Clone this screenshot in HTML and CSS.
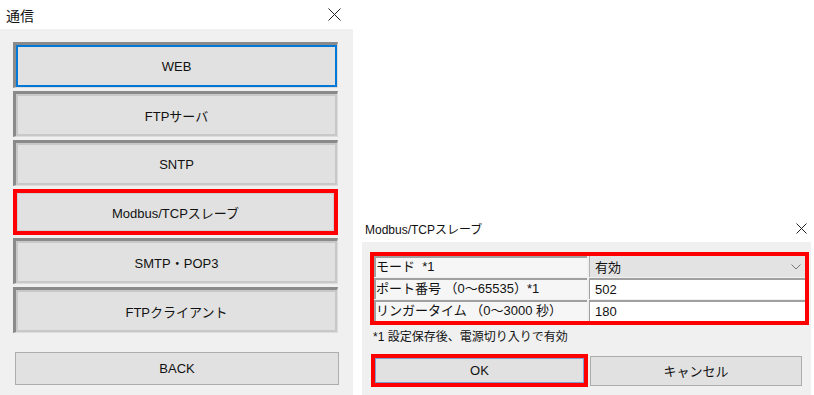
FILE: index.html
```html
<!DOCTYPE html>
<html lang="ja">
<head>
  <meta charset="UTF-8" />
  <title>通信</title>
  <link rel="stylesheet" href="styles.css">
</head>
<body>
  <div class="dialog main">
    <div class="titlebar">
      <span class="title">通信</span>
      <svg class="close" width="13" height="13" viewBox="0 0 13 13"><path d="M0.5 0.5L12.5 12.5M12.5 0.5L0.5 12.5" stroke="#222" stroke-width="1" fill="none"/></svg>
    </div>
    <div class="panel">
      <div class="menu">
        <div class="frame"><div class="btn focus">WEB</div></div>
        <div class="frame"><div class="btn">FTPサーバ</div></div>
        <div class="frame"><div class="btn">SNTP</div></div>
        <div class="frame marked"><div class="btn">Modbus/TCPスレーブ</div></div>
        <div class="frame"><div class="btn">SMTP・POP3</div></div>
        <div class="frame"><div class="btn">FTPクライアント</div></div>
      </div>
      <div class="plain back">BACK</div>
    </div>
  </div>

  <div class="dialog sub">
    <div class="titlebar">
      <span class="title small">Modbus/TCPスレーブ</span>
      <svg class="close" width="11" height="11" viewBox="0 0 11 11"><path d="M0.5 0.5L10.5 10.5M10.5 0.5L0.5 10.5" stroke="#222" stroke-width="1" fill="none"/></svg>
    </div>
    <div class="panel">
      <div class="settings">
        <div class="label">モード&nbsp;&nbsp;*1</div>
        <div class="value combo">
          <span>有効</span>
          <svg width="10" height="6" viewBox="0 0 10 6"><path d="M0.5 0.5L5 5L9.5 0.5" stroke="#777" stroke-width="1" fill="none"/></svg>
        </div>
        <div class="label">ポート番号 （0～65535）*1</div>
        <div class="value field">502</div>
        <div class="label">リンガータイム （0～3000 秒）</div>
        <div class="value field">180</div>
      </div>
      <div class="note">*1 設定保存後、電源切り入りで有効</div>
      <div class="actions">
        <div class="ok-mark"><div class="plain ok">OK</div></div>
        <div class="plain cancel">キャンセル</div>
      </div>
    </div>
  </div>
</body>
</html>
```

FILE: styles.css
```css
body {
  margin: 0;
  height: 395px;
  background: #fff;
  color: #111;
  font-family: "Liberation Sans", "Noto Sans CJK JP", sans-serif;
  font-size: 13px;
  display: flex;
  align-items: flex-end;
  gap: 9px;
  overflow: hidden;
}
.dialog {
  display: flex;
  flex-direction: column;
  box-sizing: border-box;
}
.main {
  width: 353px;
  height: 395px;
}
.sub {
  width: 449px;
  height: 180px;
}
.titlebar {
  display: flex;
  align-items: center;
  justify-content: space-between;
  background: #fff;
}
.main .titlebar {
  height: 29px;
  padding: 0 12px 0 6px;
}
.sub .titlebar {
  height: 27px;
  padding: 0 4px 0 3px;
}
.title {
  font-size: 14px;
}
.title.small {
  font-size: 12px;
}
.panel {
  flex: 1;
  background: #f0f0f0;
  display: flex;
  flex-direction: column;
}
.main .panel {
  padding: 13px 0 10px 13px;
}
.menu {
  display: flex;
  flex-direction: column;
  gap: 3px;
  width: 325px;
}
.frame {
  height: 46px;
  box-sizing: border-box;
  border-style: solid;
  border-width: 3px 1px 1px 3px;
  border-color: #8a8a8a #dcdcdc #dcdcdc #8a8a8a;
}
.frame.marked {
  border: 4px solid #ff0000;
}
.btn {
  height: 100%;
  box-sizing: border-box;
  border: 2px solid #c8c8c8;
  background: #e1e1e1;
  display: flex;
  align-items: center;
  justify-content: center;
}
.btn.focus {
  border-color: #0078d7;
}
.marked .btn {
  border: 1px solid #cfcfcf;
}
.plain {
  box-sizing: border-box;
  border: 1px solid #adadad;
  background: #e1e1e1;
  display: flex;
  align-items: center;
  justify-content: center;
}
.back {
  margin-top: auto;
  margin-left: 2px;
  width: 324px;
  height: 33px;
}
.sub .panel {
  padding: 10px 3px 8px 8px;
}
.settings {
  display: grid;
  grid-template-columns: 213px 216px;
  grid-auto-rows: 21px;
  column-gap: 2px;
  row-gap: 1px;
  border: 4px solid #ff0000;
  width: max-content;
}
.label {
  box-sizing: border-box;
  border-top: 2px solid #a0a0a0;
  border-left: 2px solid #a0a0a0;
  background: #f6f6f6;
  line-height: 18px;
  white-space: nowrap;
  overflow: hidden;
}
.value {
  box-sizing: border-box;
  padding-left: 5px;
  display: flex;
  align-items: center;
}
.combo {
  background: #e3e3e3;
  border-left: 1px solid #b0b0b0;
  justify-content: space-between;
  padding-right: 4px;
}
.field {
  background: #fff;
  border-top: 2px solid #a0a0a0;
  border-left: 1px solid #a0a0a0;
}
.note {
  font-size: 12px;
  line-height: 20px;
  padding: 2px 0 0 3px;
}
.actions {
  margin-top: 7px;
  display: flex;
  align-items: center;
  gap: 2px;
  padding-left: 1px;
}
.ok-mark {
  width: 217px;
  height: 33px;
  box-sizing: border-box;
  border: 4px solid #ff0000;
}
.ok {
  height: 100%;
  border-color: #7f9fd3;
}
.cancel {
  width: 212px;
  height: 30px;
}
```
